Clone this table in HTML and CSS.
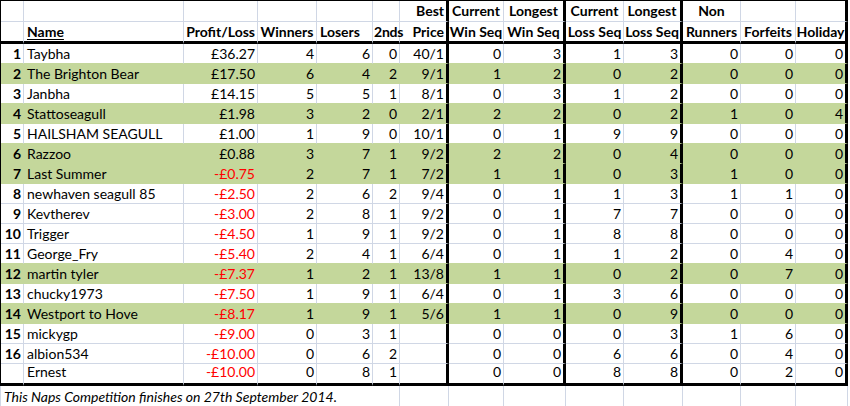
FILE: index.html
```html
<!DOCTYPE html>
<html>
<head>
<meta charset="utf-8">
<link rel="stylesheet" href="styles.css">
</head>
<body>
<div class="sheet">
  <div class="row hd hd1">
    <div class="c"></div><div class="c"></div><div class="c"></div><div class="c"></div><div class="c"></div><div class="c"></div>
    <div class="c">Best</div>
    <div class="c mid">Current</div>
    <div class="c mid">Longest</div>
    <div class="c mid">Current</div>
    <div class="c mid">Longest</div>
    <div class="c mid">Non</div>
    <div class="c"></div><div class="c"></div>
  </div>
  <div class="row hd hd2">
    <div class="c"></div>
    <div class="c left"><u>Name</u></div>
    <div class="c">Profit/Loss</div>
    <div class="c mid">Winners</div>
    <div class="c left">Losers</div>
    <div class="c left tight">2nds</div>
    <div class="c">Price</div>
    <div class="c mid">Win Seq</div>
    <div class="c mid">Win Seq</div>
    <div class="c mid">Loss Seq</div>
    <div class="c mid">Loss Seq</div>
    <div class="c mid">Runners</div>
    <div class="c mid">Forfeits</div>
    <div class="c mid">Holiday</div>
  </div>

  <div class="row"><div class="c n">1</div><div class="c left">Taybha</div><div class="c">£36.27</div><div class="c">4</div><div class="c">6</div><div class="c">0</div><div class="c">40/1</div><div class="c">0</div><div class="c">3</div><div class="c">1</div><div class="c">3</div><div class="c">0</div><div class="c">0</div><div class="c">0</div></div>
  <div class="row g"><div class="c n">2</div><div class="c left">The Brighton Bear</div><div class="c">£17.50</div><div class="c">6</div><div class="c">4</div><div class="c">2</div><div class="c">9/1</div><div class="c">1</div><div class="c">2</div><div class="c">0</div><div class="c">2</div><div class="c">0</div><div class="c">0</div><div class="c">0</div></div>
  <div class="row"><div class="c n">3</div><div class="c left">Janbha</div><div class="c">£14.15</div><div class="c">5</div><div class="c">5</div><div class="c">1</div><div class="c">8/1</div><div class="c">0</div><div class="c">3</div><div class="c">1</div><div class="c">2</div><div class="c">0</div><div class="c">0</div><div class="c">0</div></div>
  <div class="row g"><div class="c n">4</div><div class="c left">Stattoseagull</div><div class="c">£1.98</div><div class="c">3</div><div class="c">2</div><div class="c">0</div><div class="c">2/1</div><div class="c">2</div><div class="c">2</div><div class="c">0</div><div class="c">2</div><div class="c">1</div><div class="c">0</div><div class="c">4</div></div>
  <div class="row"><div class="c n">5</div><div class="c left">HAILSHAM SEAGULL</div><div class="c">£1.00</div><div class="c">1</div><div class="c">9</div><div class="c">0</div><div class="c">10/1</div><div class="c">0</div><div class="c">1</div><div class="c">9</div><div class="c">9</div><div class="c">0</div><div class="c">0</div><div class="c">0</div></div>
  <div class="row g"><div class="c n">6</div><div class="c left">Razzoo</div><div class="c">£0.88</div><div class="c">3</div><div class="c">7</div><div class="c">1</div><div class="c">9/2</div><div class="c">2</div><div class="c">2</div><div class="c">0</div><div class="c">4</div><div class="c">0</div><div class="c">0</div><div class="c">0</div></div>
  <div class="row g"><div class="c n">7</div><div class="c left">Last Summer</div><div class="c neg">-£0.75</div><div class="c">2</div><div class="c">7</div><div class="c">1</div><div class="c">7/2</div><div class="c">1</div><div class="c">1</div><div class="c">0</div><div class="c">3</div><div class="c">1</div><div class="c">0</div><div class="c">0</div></div>
  <div class="row"><div class="c n">8</div><div class="c left">newhaven seagull 85</div><div class="c neg">-£2.50</div><div class="c">2</div><div class="c">6</div><div class="c">2</div><div class="c">9/4</div><div class="c">0</div><div class="c">1</div><div class="c">1</div><div class="c">3</div><div class="c">1</div><div class="c">1</div><div class="c">0</div></div>
  <div class="row"><div class="c n">9</div><div class="c left">Kevtherev</div><div class="c neg">-£3.00</div><div class="c">2</div><div class="c">8</div><div class="c">1</div><div class="c">9/2</div><div class="c">0</div><div class="c">1</div><div class="c">7</div><div class="c">7</div><div class="c">0</div><div class="c">0</div><div class="c">0</div></div>
  <div class="row"><div class="c n">10</div><div class="c left">Trigger</div><div class="c neg">-£4.50</div><div class="c">1</div><div class="c">9</div><div class="c">1</div><div class="c">9/2</div><div class="c">0</div><div class="c">1</div><div class="c">8</div><div class="c">8</div><div class="c">0</div><div class="c">0</div><div class="c">0</div></div>
  <div class="row"><div class="c n">11</div><div class="c left">George_Fry</div><div class="c neg">-£5.40</div><div class="c">2</div><div class="c">4</div><div class="c">1</div><div class="c">6/4</div><div class="c">0</div><div class="c">1</div><div class="c">1</div><div class="c">2</div><div class="c">0</div><div class="c">4</div><div class="c">0</div></div>
  <div class="row g"><div class="c n">12</div><div class="c left">martin tyler</div><div class="c neg">-£7.37</div><div class="c">1</div><div class="c">2</div><div class="c">1</div><div class="c">13/8</div><div class="c">1</div><div class="c">1</div><div class="c">0</div><div class="c">2</div><div class="c">0</div><div class="c">7</div><div class="c">0</div></div>
  <div class="row"><div class="c n">13</div><div class="c left">chucky1973</div><div class="c neg">-£7.50</div><div class="c">1</div><div class="c">9</div><div class="c">1</div><div class="c">6/4</div><div class="c">0</div><div class="c">1</div><div class="c">3</div><div class="c">6</div><div class="c">0</div><div class="c">0</div><div class="c">0</div></div>
  <div class="row g"><div class="c n">14</div><div class="c left">Westport to Hove</div><div class="c neg">-£8.17</div><div class="c">1</div><div class="c">9</div><div class="c">1</div><div class="c">5/6</div><div class="c">1</div><div class="c">1</div><div class="c">0</div><div class="c">9</div><div class="c">0</div><div class="c">0</div><div class="c">0</div></div>
  <div class="row"><div class="c n">15</div><div class="c left">mickygp</div><div class="c neg">-£9.00</div><div class="c">0</div><div class="c">3</div><div class="c">1</div><div class="c"></div><div class="c">0</div><div class="c">0</div><div class="c">0</div><div class="c">3</div><div class="c">1</div><div class="c">6</div><div class="c">0</div></div>
  <div class="row"><div class="c n">16</div><div class="c left">albion534</div><div class="c neg">-£10.00</div><div class="c">0</div><div class="c">6</div><div class="c">2</div><div class="c"></div><div class="c">0</div><div class="c">0</div><div class="c">6</div><div class="c">6</div><div class="c">0</div><div class="c">4</div><div class="c">0</div></div>
  <div class="row last"><div class="c n"></div><div class="c left">Ernest</div><div class="c neg">-£10.00</div><div class="c">0</div><div class="c">8</div><div class="c">1</div><div class="c"></div><div class="c">0</div><div class="c">0</div><div class="c">8</div><div class="c">8</div><div class="c">0</div><div class="c">2</div><div class="c">0</div></div>

  <div class="row foot">
    <div class="c note">This Naps Competition finishes on 27th September 2014.</div>
    <div class="c"></div><div class="c"></div><div class="c"></div><div class="c"></div><div class="c"></div><div class="c"></div><div class="c"></div><div class="c"></div>
  </div>
</div>
</body>
</html>
```

FILE: styles.css
```css
:root {
  --grid: #d0d7e5;
  --green: #c4d79b;
}

html, body {
  margin: 0;
  padding: 0;
  background: #ffffff;
}

body {
  font-family: "Lato", "Liberation Sans", sans-serif;
  font-size: 14px;
  color: #000000;
}

.sheet {
  width: 848px;
  border-top: 1px solid #000;
}

.row {
  display: grid;
  grid-template-columns: 23px 160px 74px 59px 56px 27px 49px 55px 62px 58px 59px 58px 55px 52px;
  height: 20px;
  border-left: 1px solid #000;
}

.c {
  box-sizing: border-box;
  display: flex;
  align-items: flex-end;
  justify-content: flex-end;
  padding: 0 2px 1px 3px;
  border-right: 1px solid var(--grid);
  border-bottom: 1px solid var(--grid);
  white-space: nowrap;
  overflow: hidden;
  line-height: 16px;
}

.c.left { justify-content: flex-start; }
.c.mid { justify-content: center; padding-left: 1px; padding-right: 1px; }
.c.tight { padding-left: 1px; padding-right: 0; overflow: visible; letter-spacing: -0.2px; }
.c.n { font-weight: bold; padding-right: 2px; padding-left: 0; }
.c.neg { color: #ff0000; }

.row:not(.foot) > .c:nth-child(7),
.row:not(.foot) > .c:nth-child(9),
.row:not(.foot) > .c:nth-child(11),
.row:not(.foot) > .c:nth-child(14) {
  border-right: 3px solid #000;
}

.hd { font-weight: bold; }
.hd1 { height: 21px; }
.hd1 .c { padding-bottom: 2px; }
.hd2 { height: 22px; }
.hd2 .c { border-bottom: 3px solid #000; padding-bottom: 1px; }
.hd2 u { text-underline-offset: 2px; }

.g .c {
  background: var(--green);
  border-right-color: var(--green);
  border-bottom-color: var(--green);
}
.row:has(+ .g) .c { border-bottom-color: var(--green); }

.last { height: 22px; }
.last .c { border-bottom: 3px solid #000; padding-bottom: 3px; }

.foot {
  height: 21px;
  border-left-color: var(--grid);
  grid-template-columns: 399px 49px 55px 62px 58px 59px 58px 55px 52px;
}
.foot .c.note {
  justify-content: flex-start;
  font-style: italic;
  padding-left: 3px;
}
```
